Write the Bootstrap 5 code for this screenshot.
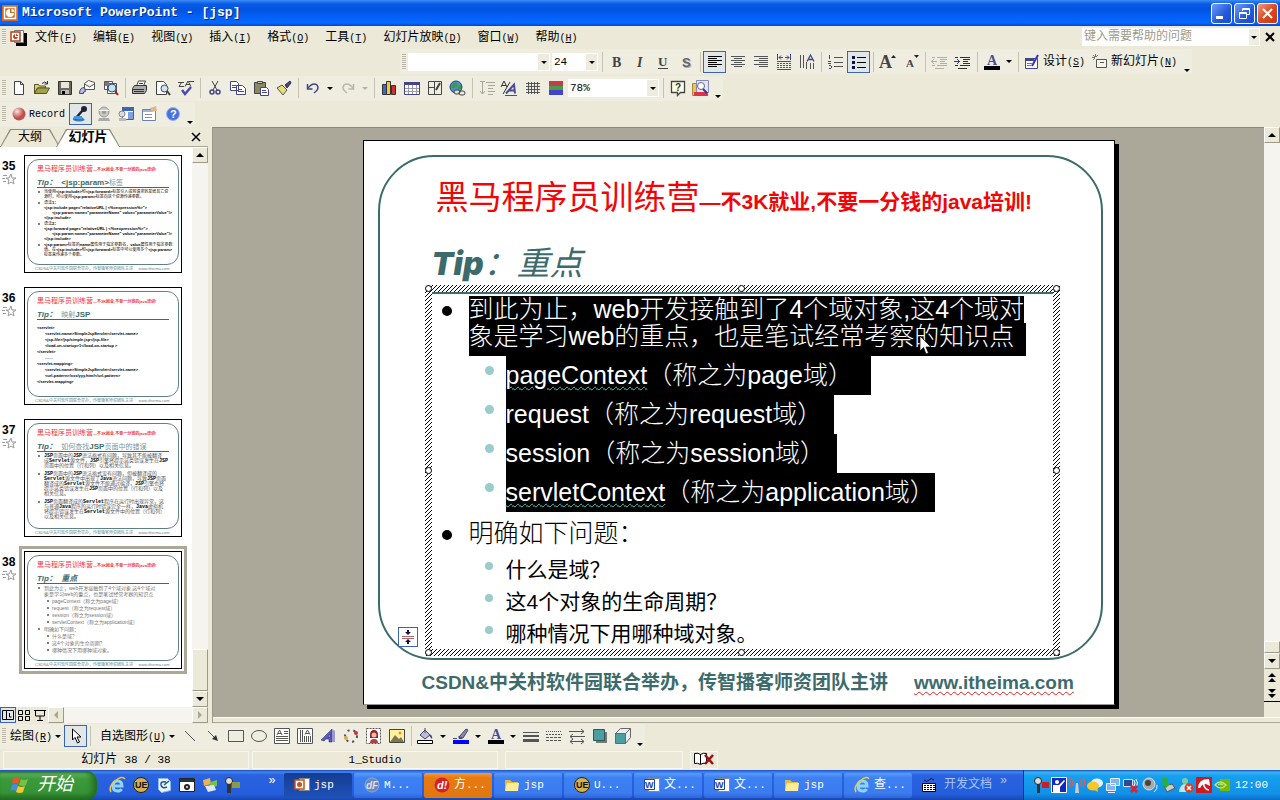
<!DOCTYPE html>
<html lang="zh-CN">
<head>
<meta charset="utf-8">
<meta name="viewport" content="width=device-width, initial-scale=1">
<title>Microsoft PowerPoint - [jsp]</title>
<link href="https://cdn.jsdelivr.net/npm/bootstrap@5.3.0/dist/css/bootstrap.min.css" rel="stylesheet">
<style>
:root{--face:#ece9d8;--shade:#aca899;--teal:#3d6b6b;--ink:#000}
body{background:var(--face);color:#000;font:12px/16px "Liberation Mono","Noto Sans CJK SC",monospace;overflow:hidden}
button{border:0;background:none;padding:0;color:inherit;font:inherit}
svg{display:block;flex:none;overflow:visible}
.app{min-height:100vh}
.titlebar{height:26px;background:linear-gradient(#3c8cf8 0,#0a5be6 4px,#0253e0 9px,#0462fa 18px,#0668fe 23px,#0342c8 26px);color:#fff;padding:0 2px;gap:4px}
.titlebar h1{font:bold 13px/20px "Liberation Mono",monospace;margin:0;text-shadow:1px 1px 0 #0a2a7a}
.winbtn{width:21px;height:21px;border:1px solid #fff;border-radius:3px;background:linear-gradient(135deg,#6f9cf5,#2458dc 60%,#1c4bd0)}
.winbtn.closer{background:linear-gradient(135deg,#ef9a7e,#dd4a22 50%,#c8360e)}
.menubar{height:22px}
.menubar a{color:#000;text-decoration:none;padding:2px 8px 0}
.key{font-size:10px}
.key u{text-underline-offset:1px}
.latin{font-size:11px}
.grip{width:4px;height:16px;margin:0 1px 0 2px;flex:none;background:repeating-linear-gradient(#b5b2a2 0 1px,#f5f4ec 1px 2px)}
.bar{height:26px}
.bar.fmt{height:27px;margin-left:400px}
.strip{height:25px;background:#efede0;border-radius:0 2px 2px 0}
.tool{width:23px;height:22px;display:flex;align-items:center;justify-content:center;flex:none}
.tool.on{background:#e1e6e8;border:1px solid #3d64b4}
.tool.wide{width:auto;gap:3px;padding:0 4px 0 3px}
.tool.wide>span{padding-top:2px}
.drop{width:12px;height:22px;display:flex;align-items:center;justify-content:center;flex:none}
.drop::after,.more::after{content:"";border:3px solid transparent;border-top-color:#000;border-bottom:0}
.drop.dim::after{border-top-color:#b5b2a2}
.more{width:11px;height:20px;display:flex;align-items:flex-end;justify-content:center}
.rule{width:1px;height:20px;margin:0 2px 0 3px;background:#c5c2b2;flex:none}
.combo{appearance:none;border:0;border-radius:0;height:18px;padding:0 14px 0 2px;margin:0 1px;font:11px/16px "Liberation Mono",monospace;color:#000;
 background:#fff url("data:image/svg+xml,%3Csvg xmlns='http://www.w3.org/2000/svg' width='12' height='18'%3E%3Cpath fill='%23eeecdf' d='M0 1h11v16H0z'/%3E%3Cpath d='M3 8h6l-3 3z'/%3E%3C/svg%3E") no-repeat right center}
.ask{width:166px;height:18px;border:0;border-radius:0;background:#fff;padding:0 2px;font:12px/16px "Liberation Mono","Noto Sans CJK SC",monospace}
.ask::placeholder{color:#9d9a8b;opacity:1}
.askdrop{background:#efede0;border:1px solid #fff;height:18px}
/* workspace */
.outline{width:208px;flex:none}
.tabs{height:20px;border-bottom:1px solid var(--shade);padding-right:4px}
.tab{height:18px;position:relative;z-index:0;align-self:flex-end;font-size:12px;line-height:18px;width:60px;margin-bottom:-1px}
.tab::before,.tab::after{content:"";position:absolute;inset:0;z-index:-2;background:#8d8a7c;clip-path:polygon(10px 0,calc(100% - 10px) 0,100% 100%,0 100%)}
.tab::after{inset:1px 1px 0;z-index:-1;background:var(--face)}
.tab.act{font-size:13px;font-weight:bold;width:64px;margin-left:-4px;z-index:1}
.tab.act::after{background:#fff}
.track{width:16px;background:#f5f4ee;flex:none}
.sb{width:16px;height:16px;background:var(--face);border:1px solid;border-color:#fff #9c998a #9c998a #fff;display:flex;align-items:center;justify-content:center;flex:none}
.sb.none{border-color:transparent}
.slider{background:var(--face);border:1px solid;border-color:#fff #9c998a #9c998a #fff}
.thumbs{padding:8px 0 0 2px;gap:14px;background:#fff;overflow:hidden;height:560px;min-width:0}
.num{width:22px;padding-top:4px;flex:none}
.num b{font:bold 12px/14px "Liberation Sans",sans-serif;display:block}
.mini{width:158px;height:118px;border:1px solid #000;background:#fff;padding:3px 2px 0;white-space:nowrap;overflow:hidden;outline-offset:2px;font-family:"Liberation Sans","Noto Sans CJK SC",sans-serif}
.mini.cur{outline:3px solid var(--shade)}
.minibox{border:1px solid #5f8181;border-radius:12px;height:106px;padding:5px 9px 0;overflow:hidden}
.minihead{font-size:7px;line-height:8px;color:#f3343c;margin:0}
.minihead span{font-size:4px;font-weight:bold}
.minititle{font-size:8px;line-height:9px;font-weight:bold;color:#3d6b6b;margin:4px 0 1px;padding-bottom:0;border-bottom:1px solid var(--teal)}
.minititle em{font-style:normal;font-weight:normal;font-size:7px;color:#7c9595}
.minibody{font-size:4px;line-height:5px;margin:0;padding-left:7px;list-style:none}
.minibody b{line-height:0}
.minibody li{position:relative;margin-bottom:1px}
.minibody li.dot::before{content:"";position:absolute;left:-6px;top:2px;width:2px;height:2px;border-radius:50%;background:#555}
.minibody .in{padding-left:8px}
.minibody.mid{font-size:5px;line-height:5px;color:#555}
.minibody.mid li{margin-bottom:3px}
.minibody.mid b{color:#000;font-family:"Liberation Mono",monospace}
.minibody.big{font-size:5px;line-height:6px;color:#777}
.minibody.big .sub{padding-left:8px}
.minibody.big .sub::before{left:3px}
.minifoot{font-size:4px;line-height:6px;color:#6d8686;padding:1px 8px;margin:0}
.views{height:16px}
.views button{width:16px;height:16px;display:flex;align-items:center;justify-content:center}
.views .on{border:1px solid #3d64b4;background:#e1e6e8}
.splitter{width:5px;border-right:1px solid #9c998a;flex:none}
.stage{background:var(--shade);border-top:1px solid #8b8879;padding-top:12px;min-width:0}
.under{height:6px;border-top:1px solid #fff;border-bottom:1px solid #aca899}
/* slide */
.slide{width:752px;max-width:100%;height:565px;background:#fff;border:1px solid #000;border-bottom-color:#9c998a;box-shadow:4px 4px 0 #000;position:relative;padding:14px 11px 0 14px;font-family:"Liberation Sans","Noto Sans CJK SC",sans-serif}
.frame{border:2px solid var(--teal);border-radius:56px;height:505px;padding:21px 41px 0 45px}
.headline{font-size:33px;line-height:40px;font-weight:400;color:#f00606;margin:0;padding-left:11px;white-space:nowrap}
.headline small{font-size:21px;font-weight:700}
.tip{font-size:33px;line-height:40px;font-weight:400;font-style:italic;color:var(--teal);margin:22px 0 1px;padding-left:7px}
.tip b{font:italic 900 32px/40px Inter,"Liberation Sans",sans-serif}
.textbox{position:relative;padding:7px;height:371px;background:url("data:image/svg+xml,%3Csvg xmlns='http://www.w3.org/2000/svg' width='4' height='4' shape-rendering='crispEdges'%3E%3Cpath fill='%23fff' d='M0 0h4v4H0z'/%3E%3Cpath d='M3 0h1v1H3zM2 1h1v1H2zM1 2h1v1H1zM0 3h1v1H0z'/%3E%3C/svg%3E")}
.inside{background:#fff;border-top:2px solid var(--teal);height:357px;padding:2px 0 0 37px;font-size:25px;white-space:nowrap}
.inside ul{list-style:none;margin:0;padding:0}
.inside li{position:relative}
.inside .l1::before{content:"";position:absolute;left:-27px;top:10px;width:10px;height:10px;border-radius:50%;background:#000}
.inside .l2{margin-left:37px}
.inside .l2::before{content:"";position:absolute;left:-21px;top:10px;width:9px;height:9px;border-radius:50%;background:#9cc}
.hl{display:table;background:#000;color:#fff;font-weight:300}
.line1{line-height:27px}
.line2{line-height:27px;padding:0 12px 6px 0}
.hl39{line-height:39px}
.e18{padding-right:18px}.e12{padding-right:12px}
.wavy{text-decoration:underline wavy #4fc6b8 1px;text-underline-offset:2px}
.inside .l1.ask2{line-height:42px;font-weight:300}
.inside .l1.ask2::before{top:18px}
.inside .l2.q{font-size:21px;line-height:32px}
.inside .l2.q::before{top:8px;width:8px;height:8px}
.knob{position:absolute;width:7px;height:7px;border:1px solid #000;border-radius:50%;background:#fff}
.k-t{top:0}.k-m{top:182px}.k-b{bottom:0}.k-l{left:0}.k-c{left:calc(50% - 4px)}.k-r{right:0}
.smart{position:absolute;left:34px;top:486px;width:20px;height:20px;border:1px solid #3d64b4;background:#fff;display:flex;align-items:center;justify-content:center}
.pointer{position:absolute;left:555px;top:194px}
.foot{font-size:19px;line-height:26px;font-weight:700;color:var(--teal);padding-left:44px;margin:10px 0 0;white-space:nowrap;gap:26px}
.foot a{color:inherit;text-decoration:underline wavy #e02020 1px;text-underline-offset:2px}
/* bottom */
.cell{border:1px solid #f7f6ef;height:18px;text-align:center;line-height:16px}
.status{height:21px;padding:1px 3px;gap:3px}
.taskbar{height:30px;background:linear-gradient(#1c49b8 0,#3f86f0 2px,#2a62e0 5px,#245edc 24px,#1b46b0 30px);color:#fff}
.start{width:97px;height:29px;border-radius:0 10px 10px 0;background:linear-gradient(#2c7a2c 0,#5fb45f 3px,#3c9a3c 8px,#359235 22px,#226c22);font-size:18px;font-style:italic;gap:7px;padding-left:10px;box-shadow:inset -4px 0 6px #1f6a1f}
.quick{padding-left:9px;gap:0;width:155px}
.quick button{width:23px;display:flex;justify-content:center}
.task{width:68px;height:25px;border-radius:2px;background:linear-gradient(#5b9bf8,#3c80f2 5px,#3b7cf0 20px,#2f66d6);gap:4px;padding-left:10px;flex:0 1 auto;overflow:hidden;white-space:nowrap}
.task.down{background:linear-gradient(#153d92,#1e51b8)}
.task.alert0{background:linear-gradient(#f59a3c,#e67a10 5px,#e0770f)}
.tray{background:linear-gradient(#0c4fb8 0,#3cb0f6 2px,#16a0ee 6px,#1190e8 24px,#0d6cc8);border-left:1px solid #0a3a8c;width:257px;padding:0 12px 0 9px;gap:2px}
</style>
</head>
<body>
<div class="app d-flex flex-column">

<header class="titlebar d-flex align-items-center">
  <svg width="16" height="16" viewBox="0 0 16 16"><path fill="#d2691e" d="M0 0h16v16H0z"/><path fill="none" stroke="#fff" stroke-width="1.5" d="M2.5 2.5h11v11h-11z"/><path fill="#fff" d="M8 4a4 4 0 1 0 4 4H8zM9.500 4v3h3A3 3 0 0 0 9.500 4z"/></svg>
  <h1 class="flex-grow-1">Microsoft PowerPoint - [jsp]</h1>
  <div class="d-flex" style="gap:2px">
    <button class="winbtn" aria-label="最小化"><svg width="19" height="19"><path fill="#fff" d="M4 12h7v3H4z"/></svg></button>
    <button class="winbtn" aria-label="还原"><svg width="19" height="19" fill="none" stroke="#fff"><path d="M7.500 7V4.500h7v6H12M4.500 8.500h7v6h-7zM4 9.500h8M7 5.500h8"/></svg></button>
    <button class="winbtn closer" aria-label="关闭"><svg width="19" height="19"><path stroke="#fff" stroke-width="2" d="M5 5l9 9M14 5l-9 9"/></svg></button>
  </div>
</header>

<nav class="menubar d-flex align-items-center" aria-label="菜单">
  <span class="grip"></span>
  <svg style="margin-left:3px" width="17" height="17" viewBox="0 0 17 17"><path d="M6 4h11v13H6z"/><path fill="#fff" stroke="#777" d="M4.500 1.500h9v12h-9z"/><path fill="#fff" stroke="#b8401c" stroke-width="1.500" d="M1 3h9v9H1z"/><path fill="#b8401c" d="M5 5a2.500 2.500 0 1 0 3 3H5zM6 4.500V7h2.500z"/></svg>
  <div class="d-flex flex-grow-1 ms-0">
    <a href="#">文件<span class="key">(<u>F</u>)</span></a><a href="#">编辑<span class="key">(<u>E</u>)</span></a><a href="#">视图<span class="key">(<u>V</u>)</span></a><a href="#">插入<span class="key">(<u>I</u>)</span></a><a href="#">格式<span class="key">(<u>O</u>)</span></a><a href="#">工具<span class="key">(<u>T</u>)</span></a><a href="#">幻灯片放映<span class="key">(<u>D</u>)</span></a><a href="#">窗口<span class="key">(<u>W</u>)</span></a><a href="#">帮助<span class="key">(<u>H</u>)</span></a>
  </div>
  <input class="ask" type="text" aria-label="键入需要帮助的问题" placeholder="键入需要帮助的问题">
  <button class="drop askdrop" aria-label="帮助列表"></button>
  <button style="padding:0 6px" aria-label="关闭文档"><svg width="8" height="8"><path stroke="#000" stroke-width="2" d="M0 0l8 8M8 0L0 8"/></svg></button>
</nav>

<div class="bar fmt d-flex align-items-center">
 <div class="strip d-flex align-items-center">
  <span class="grip"></span>
  <select class="combo" style="width:142px" aria-label="字体"><option></option></select>
  <select class="combo" style="width:46px" aria-label="字号"><option>24</option></select>
  <span class="rule"></span>
  <button class="tool" aria-label="加粗"><svg width="16" height="16"><text x="3" y="13" font-family="Liberation Serif" font-weight="bold" font-size="14" fill="#444">B</text></svg></button>
  <button class="tool" aria-label="倾斜"><svg width="16" height="16"><text x="5" y="13" font-family="Liberation Serif" font-weight="bold" font-style="italic" font-size="14" fill="#444">I</text></svg></button>
  <button class="tool" aria-label="下划线"><svg width="16" height="16"><text x="3" y="12" font-family="Liberation Serif" font-weight="bold" font-size="13" fill="#444">U</text><path stroke="#444" d="M3 14.500h10"/></svg></button>
  <button class="tool" aria-label="阴影"><svg width="16" height="16"><text x="4" y="13" font-family="Liberation Sans" font-weight="bold" font-size="13" fill="#666" style="text-shadow:1px 1px 0 #aaa">S</text></svg></button>
  <span class="rule"></span>
  <button class="tool on" aria-label="左对齐"><svg width="16" height="14" stroke="#000"><path d="M1 1.500h14M1 3.500h9M1 5.500h14M1 7.500h9M1 9.500h14M1 11.500h9"/></svg></button>
  <button class="tool" aria-label="居中"><svg width="16" height="14" stroke="#555"><path d="M1 1.500h14M4 3.500h8M1 5.500h14M4 7.500h8M1 9.500h14M4 11.500h8"/></svg></button>
  <button class="tool" aria-label="右对齐"><svg width="16" height="14" stroke="#555"><path d="M1 1.500h14M6 3.500h9M1 5.500h14M6 7.500h9M1 9.500h14M6 11.500h9"/></svg></button>
  <button class="tool" aria-label="分散对齐"><svg width="16" height="16" fill="none" stroke="#555"><path stroke="#448" d="M1.500 0v6M14.500 0v6M3 3.500h4M9 3.500h4M5 1.500l-2 2 2 2M11 1.500l2 2-2 2"/><path d="M1 7.500h14M1 15.500h14"/><path stroke-dasharray="2 1" d="M1 9.500h14M1 11.500h14M1 13.500h14"/></svg></button>
  <button class="tool" aria-label="文字方向"><svg width="16" height="16" stroke="#555"><path d="M1.500 1v13M4.500 1v13M7.500 8v7M11.500 9v6M14.500 9v6" fill="none"/><path stroke="#448" fill="none" stroke-width="1.300" d="M8 7.500L11.500 1 15 7.500M9.500 5.500h4"/></svg></button>
  <span class="rule"></span>
  <button class="tool" aria-label="编号"><svg width="16" height="16" stroke="#555"><path d="M6 3.500h9M6 8.500h9M6 12.500h9"/><path stroke="#448" d="M1.500 1v4M0 7.500h3M0 9.500h3M1 11.500h2M1 14.500h2M3.500 12v2"/></svg></button>
  <button class="tool on" aria-label="项目符号"><svg width="16" height="16" stroke="#000"><path d="M6 3.500h9M6 8.500h9M6 13.500h9"/><path stroke="none" fill="#114" d="M1 2h3v3H1zM1 7h3v3H1zM1 12h3v3H1z"/></svg></button>
  <span class="rule"></span>
  <button class="tool" aria-label="增大字号"><svg width="18" height="16"><text x="0" y="14" font-family="Liberation Serif" font-weight="bold" font-size="18" fill="#444">A</text><path fill="#222" d="M12 4l2.500-3L17 4z"/></svg></button>
  <button class="tool" aria-label="减小字号"><svg width="16" height="16"><text x="3" y="13" font-family="Liberation Serif" font-weight="bold" font-size="11" fill="#444">A</text><path fill="#222" d="M11 1h5l-2.500 3z"/></svg></button>
  <span class="rule"></span>
  <button class="tool" aria-label="减少缩进"><svg width="18" height="14" fill="none" stroke="#b3b0a2"><path d="M1 2.500h3M6 2.500h10M9 4.500h7M9 6.500h5M9 8.500h7M1 10.500h3M6 10.500h10M4 13.500h9M0 6.500h6M3 4L0.500 6.500 3 9"/></svg></button>
  <button class="tool" aria-label="增加缩进"><svg width="18" height="14" fill="none" stroke="#333"><path d="M1 2.500h3M6 2.500h10M9 4.500h7M9 6.500h5M9 8.500h7M1 10.500h3M6 10.500h10M4 13.500h9"/><path stroke="#339" d="M0 6.500h6M3 4l2.500 2.500L3 9"/></svg></button>
  <span class="rule"></span>
  <button class="tool" aria-label="字体颜色"><svg width="16" height="16"><text x="3" y="11" font-family="Liberation Serif" font-weight="bold" font-size="14" fill="#4b4b9b">A</text><path d="M0 12h16v4H0z"/></svg></button><button class="drop" aria-label="更多颜色"></button>
  <span class="rule"></span>
  <button class="tool wide"><svg width="16" height="16"><path fill="#fff" stroke="#448" d="M1.500 4.500h12v10h-12z"/><path fill="#448" d="M1 4h9v3H1z"/><path stroke="#777" d="M3 9.500h5M3 11.500h4"/><path stroke="#33c" stroke-width="2" d="M14 1L8 12"/></svg><span>设计<span class="key">(<u>S</u>)</span></span></button>
  <button class="tool wide"><svg width="16" height="16" fill="none" stroke="#555"><path fill="#f6f5ec" d="M4.500 5.500h10v8h-10z"/><path d="M8 8.500h4"/><path stroke="#777" d="M3.500 0v3M0 3.500h3M1 1l2 2M6 1L4 3M1 6l2-2"/></svg><span>新幻灯片<span class="key">(<u>N</u>)</span></span></button>
  <span class="more"></span>
 </div>
</div>

<div class="bar d-flex align-items-center">
 <div class="strip d-flex align-items-center">
  <span class="grip"></span>
  <button class="tool" aria-label="新建"><svg width="16" height="16"><path fill="#fff" stroke="#444" d="M3.500 1.500h6l3 3v10h-9zM9.500 1.500v3h3"/></svg></button>
  <button class="tool" aria-label="打开"><svg width="17" height="16"><path fill="#d8d08a" stroke="#555522" d="M1.500 13.500v-9h4l1 1.500h6v2h-8z"/><path fill="#a3a14a" stroke="#555522" d="M1.500 13.500l3-5.500h12l-3 5.500z"/><path fill="none" stroke="#333" d="M9 3.500q3-3 5 0M14.500 1v3h-3"/></svg></button>
  <button class="tool" aria-label="保存"><svg width="16" height="16"><path fill="#6b6b5a" stroke="#333" d="M1.500 1.500h13v13h-13z"/><path fill="#e8e6d8" d="M4 2h8v6H4z"/><path fill="#bbb" d="M4 10h8v4H4z"/><path d="M5 11h3v3H5z"/></svg></button>
  <button class="tool" aria-label="电子邮件"><svg width="17" height="16"><path fill="#fff" stroke="#555" d="M5.500 3.500l4-3 6 2v7h-10zM5.500 4l5 3 5-3"/><path fill="#bbd" stroke="#448" d="M.5 13.500q0-6 5-6l1 4q-3 0-2 2z"/></svg></button>
  <button class="tool" aria-label="搜索"><svg width="16" height="16"><path fill="#fff" stroke="#555" d="M4.500 3.500h9v10h-9zM1.500 1.500h8v8h-8z"/><path fill="#778" d="M2 2h4v4H2z"/><circle cx="9" cy="8" r="4" fill="#bde6f0" stroke="#447"/><path stroke="#922" stroke-width="2" d="M12 11l3 4"/></svg></button>
  <span class="rule"></span>
  <button class="tool" aria-label="打印"><svg width="17" height="16"><path fill="#fff" stroke="#444" d="M5.500 6l2-5h7l-2 5"/><path fill="#aaa" stroke="#333" d="M1.500 8.500l2-3h12v5l-2 3h-12z"/><path stroke="#333" d="M2 9.500h11M3 11.500h10M8 3.500h4"/></svg></button>
  <button class="tool" aria-label="打印预览"><svg width="16" height="16"><path fill="#fff" stroke="#444" d="M1.500 1.500h7l3 3v10h-10z"/><circle cx="9.500" cy="8.500" r="3.500" fill="#cfe4ee" stroke="#444"/><path stroke="#444" stroke-width="2" d="M12 11l3 4"/></svg></button>
  <button class="tool" aria-label="拼写检查"><svg width="16" height="16" fill="none"><path stroke="#444" d="M0 2.500h6M3.500 2.500L1 6.500h5M7 6.500L10 1l3 5.500M8 4.500h4M11 1.500h5"/><path stroke="#4b4bb0" stroke-width="2.500" d="M4 10l3 4 6-7"/></svg></button>
  <span class="rule"></span>
  <button class="tool" aria-label="剪切"><svg width="16" height="16" fill="none"><path stroke="#444" d="M5 1l5 9M11 1L6 10"/><circle cx="5" cy="12" r="2" stroke="#448" stroke-width="1.500"/><circle cx="11" cy="12" r="2" stroke="#448" stroke-width="1.500"/></svg></button>
  <button class="tool" aria-label="复制"><svg width="16" height="16" fill="#fff" stroke="#448"><path d="M.5 1.500h6l2 2v7h-8zM6.500 5.500h6l3 3v6h-9z"/><path d="M2 5.500h4M2 7.500h4M8 9.500h4M8 11.500h6"/></svg></button>
  <button class="tool" aria-label="粘贴"><svg width="16" height="16"><path fill="#8a8a62" stroke="#444" d="M1.500 2.500h11v11h-11z"/><path fill="#ccc" stroke="#444" d="M4.500 1.500h5v2h-5z"/><path fill="#fff" stroke="#448" d="M7.500 7.500h6l2 2v6h-8z"/><path stroke="#448" d="M9 10.500h4M9 12.500h5"/></svg></button>
  <button class="tool" aria-label="格式刷"><svg width="16" height="16"><path fill="#e6dc7a" stroke="#555" d="M1 8l5-3 5 5-4 5z"/><path fill="#448" stroke="#335" d="M9 5l5-4 1 2-4 5z"/></svg></button>
  <span class="rule"></span>
  <button class="tool" aria-label="撤消"><svg width="16" height="16" fill="none" stroke="#448"><path stroke-width="1.500" d="M3 8q5-6 9-3 3 4-3 8"/><path d="M2.500 4v5h5" stroke-width="1.500"/></svg></button><button class="drop" aria-label="撤消列表"></button>
  <button class="tool" aria-label="恢复"><svg width="16" height="16" fill="none" stroke="#b9b6a7"><path stroke-width="1.500" d="M13 8Q8 2 4 5q-3 4 3 8M13.500 4v5h-5"/></svg></button><button class="drop dim" aria-label="恢复列表"></button>
  <span class="rule"></span>
  <button class="tool" aria-label="插入图表"><svg width="16" height="16" stroke="#333"><path fill="#46c" d="M1.500 4.500h4v10h-4z"/><path fill="#ec3" d="M5.500 1.500h4v13h-4z"/><path fill="#c33" d="M10.500 5.500h4v9h-4z"/></svg></button>
  <button class="tool" aria-label="插入表格"><svg width="16" height="16"><path fill="#fff" stroke="#448" d="M.5 2.500h15v12H.5z"/><path fill="#448" d="M0 2h16v3H0z"/><path stroke="#99a" d="M4.500 5v9M8.500 5v9M12.500 5v9M1 8.500h14M1 11.500h14"/></svg></button>
  <button class="tool" aria-label="表格和边框"><svg width="16" height="16" fill="none" stroke="#444"><path d="M1.500 1.500h13v13h-13zM7.500 2v12M2 7.500h6"/><path stroke-width="2" d="M13 3L9 10"/></svg></button>
  <button class="tool" aria-label="超链接"><svg width="17" height="17"><circle cx="7" cy="7" r="6" fill="#4a8fd0" stroke="#247"/><path fill="#3a9a4a" d="M4 3q3-2 4 1T5 8 3 6zM9 6l3-1v4l-3 1z"/><rect x="5" y="10" width="6" height="4" rx="2" fill="#ddd" stroke="#444"/><rect x="10" y="11" width="6" height="4" rx="2" fill="none" stroke="#444"/></svg></button>
  <span class="rule"></span>
  <button class="tool" aria-label="全部展开"><svg width="16" height="16" fill="none" stroke="#aaa798"><path d="M3.500 1v13M1 11l2.500 3L6 11M1 1.500h5M7 2.500h9M9 5.500h7M9 8.500h5M9 11.500h7M9 14.500h5"/></svg></button>
  <button class="tool" aria-label="显示格式"><svg width="17" height="16" fill="none"><path stroke="#333" d="M0 7l3-6 3 6M1 5.500h4M2 14L9 2"/><path stroke="#4b4b9b" stroke-width="2" d="M5 13.500l8-9 1 9M8 10.500h6"/><path stroke="#4b4b9b" d="M4 15.500h12"/></svg></button>
  <button class="tool" aria-label="网格"><svg width="16" height="16" stroke="#555"><path d="M3.500 2v12M6.500 2v12M9.500 2v12M12.500 2v12M1 3.500h14M1 6.500h14M1 9.500h14M1 12.500h14"/></svg></button>
  <button class="tool" aria-label="颜色"><svg width="16" height="16"><path fill="#c0404a" d="M1 1h14v5H1z"/><path fill="#4a9a4a" d="M1 6h14v4H1z"/><path fill="#4444c8" d="M1 10h14v5H1z"/></svg></button>
  <select class="combo" style="width:91px" aria-label="显示比例"><option>78%</option></select>
  <span class="rule"></span>
  <button class="tool" aria-label="帮助"><svg width="16" height="16"><path fill="#ffffe6" stroke="#444" stroke-width="1.300" d="M1.500 1.500h13v11h-4l-3 3v-3h-6z"/><text x="5" y="11" font-family="Liberation Sans" font-weight="bold" font-size="10" fill="#333">?</text></svg></button>
  <button class="tool" aria-label="信息检索"><svg width="17" height="17"><path fill="#ecc83a" stroke="#a84" d="M.5 3.500h5v12h-5z"/><path fill="#dfe6f6" stroke="#88b" d="M4.500.5h12v12h-12z"/><path fill="#d34" d="M2 12h14v4H2z"/><circle cx="9" cy="6" r="3.500" fill="#fff" stroke="#667"/><path stroke="#33a" stroke-width="2" d="M11 9l4 4"/></svg></button>
  <span class="more"></span>
 </div>
</div>

<div class="bar d-flex align-items-center">
 <div class="strip d-flex align-items-center">
  <span class="grip"></span>
  <button class="tool wide"><svg width="16" height="16"><defs><radialGradient id="ball" cx=".35" cy=".3"><stop offset="0" stop-color="#fbe4e0"/><stop offset="1" stop-color="#c05050"/></radialGradient></defs><circle cx="9" cy="8" r="6.500" fill="url(#ball)"/></svg><span class="key">Record</span></button>
  <button class="tool on" aria-label="麦克风"><svg width="18" height="18"><path fill="#3a7ab8" d="M1 13q4-4 9-1l3 3q-6 3-12 0z"/><path fill="none" stroke="#223" stroke-width="2.500" d="M3 14l8-9"/><circle cx="12" cy="4" r="3" fill="#223"/><path fill="#49d" d="M2 11h8v3H2z"/></svg></button>
  <button class="tool" aria-label="摄像头"><svg width="16" height="16"><circle cx="8" cy="6" r="5" fill="#c9c8c2" stroke="#999"/><circle cx="8" cy="6" r="2" fill="#999"/><path fill="#aaa" d="M3 12h10l1 3H2z"/><path stroke="#fff" d="M3 4.500h10"/></svg></button>
  <button class="tool" aria-label="窗口录制"><svg width="17" height="16"><path fill="#fff" stroke="#45619a" d="M4.500 1.500h11v12h-11z"/><path fill="#3f66b4" d="M4 1h12v4H4z"/><path fill="#7fa3d8" d="M10 6h5v7h-5z"/><circle cx="4" cy="8" r="3" fill="#ddd" stroke="#888"/><path fill="#bbb" d="M1 12h7v3H1z"/></svg></button>
  <button class="tool" aria-label="选项"><svg width="17" height="16"><path fill="#fff" stroke="#6a82b0" d="M1.500 3.500h13v11h-13z"/><path fill="#9db4da" d="M2 4h9v2H2z"/><path stroke="#88a" d="M4 8.500h7M4 11.500h7"/><path fill="#ddb98a" d="M9 2l6-2 1 5-5 1z"/></svg></button>
  <button class="tool" aria-label="录制帮助"><svg width="16" height="16"><circle cx="8" cy="8" r="6.500" fill="#4a6fe0" stroke="#9ab2f4"/><text x="5" y="12" font-family="Liberation Sans" font-weight="bold" font-size="11" fill="#fff">?</text></svg></button>
  <span class="more"></span>
 </div>
</div>

<main class="d-flex flex-grow-1">
 <aside class="outline d-flex flex-column">
  <div class="tabs d-flex align-items-center">
   <button class="tab">大纲</button><button class="tab act">幻灯片</button>
   <button class="ms-auto px-1" aria-label="关闭窗格"><svg width="8" height="8"><path stroke="#000" stroke-width="1.500" d="M0 0l8 8M8 0L0 8"/></svg></button>
  </div>
  <div class="d-flex flex-grow-1">
   <div class="thumbs d-flex flex-column flex-grow-1">
    <div class="d-flex"><div class="num"><b>35</b><svg width="14" height="13" fill="none" stroke="#999"><path d="M9 1l1 4h4l-3 2 1 4-3-2-3 2 1-4-3-2h3zM1 2.500h4M0 5.500h3M1 8.500h3"/></svg></div>
     <div class="mini"><div class="minibox"><p class="minihead">黑马程序员训练营<span>—不3K就业,不要一分钱的java培训!</span></p><p class="minititle"><i>Tip：</i>&nbsp; &lt;jsp:param&gt;<em>标签</em></p>
      <ul class="minibody"><li class="dot">当使用<b>&lt;jsp:include&gt;</b>和<b>&lt;jsp:forward&gt;</b>标签引入或将请求转发给其它资<br>源时，可以使用<b>&lt;jsp:param&gt;</b>标签向这个资源传递参数。</li><li class="dot">语法<b>1：</b><br><b>&lt;jsp:include page="relativeURL | &lt;%=expression%&gt;"&gt;</b><div class="in"><b>&lt;jsp:param name="parameterName" value="parameterValue"/&gt;</b></div><b>&lt;/jsp:include&gt;</b></li><li class="dot">语法<b>2：</b><br><b>&lt;jsp:forward page="relativeURL | &lt;%=expression%&gt;"&gt;</b><div class="in"><b>&lt;jsp:param name="parameterName" value="parameterValue"/&gt;</b></div><b>&lt;/jsp:include&gt;</b></li><li class="dot"><b>&lt;jsp:param&gt;</b>标签的<b>name</b>属性用于指定参数名，<b>value</b>属性用于指定参数<br>值。在<b>&lt;jsp:include&gt;</b>和<b>&lt;jsp:forward&gt;</b>标签中可以使用多个<b>&lt;jsp:param&gt;</b><br>标签来传递多个参数。</li></ul></div><p class="minifoot">CSDN&amp;中关村软件园联合举办，传智播客师资团队主讲 &nbsp; &nbsp; www.itheima.com</p></div></div>
    <div class="d-flex"><div class="num"><b>36</b><svg width="14" height="13" fill="none" stroke="#999"><path d="M9 1l1 4h4l-3 2 1 4-3-2-3 2 1-4-3-2h3zM1 2.500h4M0 5.500h3M1 8.500h3"/></svg></div>
     <div class="mini"><div class="minibox"><p class="minihead">黑马程序员训练营<span>—不3K就业,不要一分钱的java培训!</span></p><p class="minititle"><i>Tip：</i>&nbsp; <em>映射</em>JSP</p>
      <ul class="minibody fw-bold ps-0 pt-1"><li>&lt;servlet&gt;</li><li class="in">&lt;servlet-name&gt;SimpleJspServlet&lt;/servlet-name&gt;</li><li class="in">&lt;jsp-file&gt;/jsp/simple.jsp&lt;/jsp-file&gt;</li><li class="in">&lt;load-on-startup&gt;1&lt;/load-on-startup &gt;</li><li>&lt;/servlet&gt;</li><li class="in">……</li><li>&lt;servlet-mapping&gt;</li><li class="in">&lt;servlet-name&gt;SimpleJspServlet&lt;/servlet-name&gt;</li><li class="in">&lt;url-pattern&gt;/xxx/yyy.html&lt;/url-pattern&gt;</li><li>&lt;/servlet-mapping&gt;</li></ul></div><p class="minifoot">CSDN&amp;中关村软件园联合举办，传智播客师资团队主讲 &nbsp; &nbsp; www.itheima.com</p></div></div>
    <div class="d-flex"><div class="num"><b>37</b><svg width="14" height="13" fill="none" stroke="#999"><path d="M9 1l1 4h4l-3 2 1 4-3-2-3 2 1-4-3-2h3zM1 2.500h4M0 5.500h3M1 8.500h3"/></svg></div>
     <div class="mini"><div class="minibox"><p class="minihead">黑马程序员训练营<span>—不3K就业,不要一分钱的java培训!</span></p><p class="minititle"><i>Tip：</i>&nbsp; <em>如何查找</em>JSP<em>页面中的错误</em></p>
      <ul class="minibody mid"><li class="dot"><b>JSP</b>页面中的<b>JSP</b>语法格式有问题，导致其不能被翻译<br>成<b>Servlet</b>源文件，<b>JSP</b>引擎将提示这类错误发生在<b>JSP</b><br>页面中的位置（行和列）以及相关信息。</li><li class="dot"><b>JSP</b>页面中的<b>JSP</b>语法格式没有问题，但被翻译成的<br><b>Servlet</b>源文件中出现了<b>Java</b>语法问题，导致<b>JSP</b>页面<br>翻译成的<b>Servlet</b>源文件不能通过编译，<b>JSP</b>引擎也将<br>提示这类错误发生在<b>JSP</b>页面中的位置（行和列）以及<br>相关信息。</li><li class="dot"><b>JSP</b>页面翻译成的<b>Servlet</b>程序在运行时出现异常，这<br>与普通<b>Java</b>程序的运行时错误完全一样，<b>Java</b>虚拟机<br>将提示错误发生在<b>Servlet</b>源文件中的位置（行和列）<br>以及相关信息。</li></ul></div><p class="minifoot">CSDN&amp;中关村软件园联合举办，传智播客师资团队主讲 &nbsp; &nbsp; www.itheima.com</p></div></div>
    <div class="d-flex"><div class="num"><b>38</b><svg width="14" height="13" fill="none" stroke="#999"><path d="M9 1l1 4h4l-3 2 1 4-3-2-3 2 1-4-3-2h3zM1 2.500h4M0 5.500h3M1 8.500h3"/></svg></div>
     <div class="mini cur"><div class="minibox"><p class="minihead">黑马程序员训练营<span>—不3K就业,不要一分钱的java培训!</span></p><p class="minititle"><i>Tip：</i>&nbsp; <i>重点</i></p>
      <ul class="minibody big"><li class="dot">到此为止，web开发接触到了4个域对象,这4个域对<br>象是学习web的重点，也是笔试经常考察的知识点</li><li class="dot sub">pageContext（称之为page域）</li><li class="dot sub">request（称之为request域）</li><li class="dot sub">session（称之为session域）</li><li class="dot sub">servletContext（称之为application域）</li><li class="dot">明确如下问题：</li><li class="dot sub">什么是域？</li><li class="dot sub">这4个对象的生命周期？</li><li class="dot sub">哪种情况下用哪种域对象。</li></ul></div><p class="minifoot">CSDN&amp;中关村软件园联合举办，传智播客师资团队主讲 &nbsp; &nbsp; www.itheima.com</p></div></div>
   </div>
   <div class="track d-flex flex-column">
    <button class="sb" aria-label="上"><svg width="8" height="4"><path d="M0 4l4-4 4 4z"/></svg></button>
    <div class="slider mt-auto" style="height:42px"></div>
    <button class="sb" aria-label="下"><svg width="8" height="4"><path d="M0 0h8L4 4z"/></svg></button>
   </div>
  </div>
  <div class="views d-flex">
   <button class="on" aria-label="普通视图"><svg width="12" height="10" fill="none" stroke="#000"><path d="M.5.5h11v9H.5zM4.500 1v8M7.500 3v4h2"/></svg></button>
   <button aria-label="浏览视图"><svg width="12" height="11" fill="none" stroke="#000"><path d="M.5.5h4v4h-4zM7.500.5h4v4h-4zM.5 6.500h4v4h-4zM7.500 6.500h4v4h-4z"/></svg></button>
   <button aria-label="放映"><svg width="12" height="11" fill="none" stroke="#000"><path d="M0 .5h12M1.500 1v5h9V1M6 6v4M3 10.500h6"/></svg></button>
   <button class="sb" aria-label="左"><svg width="4" height="8"><path fill="#aaa798" d="M4 0v8L0 4z"/></svg></button>
   <span class="flex-grow-1" style="background:#f5f4ee"></span>
   <button class="sb" aria-label="右"><svg width="4" height="8"><path fill="#aaa798" d="M0 0v8l4-4z"/></svg></button>
  </div>
 </aside>
 <div class="splitter"></div>
 <div class="d-flex flex-column flex-grow-1">
  <div class="d-flex flex-grow-1">
   <section class="stage flex-grow-1">
    <article class="slide mx-auto">
     <div class="frame">
      <h2 class="headline">黑马程序员训练营<small>—不3K就业,不要一分钱的java培训!</small></h2>
      <h3 class="tip"><b>Tip</b>：重点</h3>
      <div class="textbox">
       <div class="inside">
        <ul>
         <li class="l1"><span class="hl line1">到此为止，web开发接触到了4个域对象,这4个域对</span><span class="hl line2">象是学习web的重点，也是笔试经常考察的知识点</span></li>
         <li class="l2"><span class="hl hl39 e18"><span class="wavy">pageContext</span>（称之为page域）</span></li>
         <li class="l2"><span class="hl hl39 e12">request（称之为request域）</span></li>
         <li class="l2"><span class="hl hl39 e12">session（称之为session域）</span></li>
         <li class="l2"><span class="hl hl39"><span class="wavy">servletContext</span>（称之为application域）</span></li>
         <li class="l1 ask2">明确如下问题：</li>
         <li class="l2 q">什么是域？</li>
         <li class="l2 q">这4个对象的生命周期？</li>
         <li class="l2 q">哪种情况下用哪种域对象。</li>
        </ul>
       </div>
       <i class="knob k-t k-l"></i><i class="knob k-t k-c"></i><i class="knob k-t k-r"></i><i class="knob k-m k-l"></i><i class="knob k-m k-r"></i><i class="knob k-b k-l"></i><i class="knob k-b k-c"></i><i class="knob k-b k-r"></i>
      </div>
     </div>
     <p class="foot d-flex"><span>CSDN&amp;中关村软件园联合举办，传智播客师资团队主讲</span><a href="#">www.itheima.com</a></p>
     <button class="smart" aria-label="自动调整选项"><svg width="14" height="14"><path fill="#114" d="M6 0h2v2h2L7 5 4 2h2zM6 14h2v-2h2L7 9l-3 3h2z"/><path stroke="#a66" d="M1 6.500h12M1 8.500h12"/></svg></button>
     <svg class="pointer" width="12" height="20"><path fill="#fff" stroke="#000" stroke-width=".7" d="M1 1v15l3.500-3.500L7 19l2.500-1L7 12h5z"/></svg>
    </article>
   </section>
   <div class="track d-flex flex-column">
    <button class="sb" aria-label="向上滚动"><svg width="8" height="4"><path d="M0 4l4-4 4 4z"/></svg></button>
    <div class="slider mt-auto" style="height:12px"></div>
    <button class="sb" aria-label="向下滚动"><svg width="8" height="4"><path d="M0 0h8L4 4z"/></svg></button>
    <button class="sb none" aria-label="上一张"><svg width="8" height="9"><path d="M0 4l4-4 4 4zM0 9l4-4 4 4z"/></svg></button>
    <button class="sb none" aria-label="下一张"><svg width="8" height="9"><path d="M0 0h8L4 4zM0 5h8L4 9z"/></svg></button>
    <div style="height:16px;background:#ece9d8;border-top:1px solid #000"></div>
   </div>
  </div>
  <div class="under"></div>
 </div>
</main>

<div class="bar d-flex align-items-center">
 <div class="strip d-flex align-items-center">
  <span class="grip"></span>
  <button class="tool wide pe-0"><span>绘图<span class="key">(<u>R</u>)</span></span></button><button class="drop" aria-label="绘图菜单"></button>
  <button class="tool on" aria-label="选择对象"><svg width="12" height="16"><path fill="#fff" stroke="#000" d="M2.500 1v11l2.500-2.500L7.500 15l2-1L7 9h4z"/></svg></button>
  <span class="rule"></span>
  <button class="tool wide ms-1 pe-0"><span>自选图形<span class="key">(<u>U</u>)</span></span></button><button class="drop" aria-label="自选图形菜单"></button>
  <button class="tool" aria-label="直线"><svg width="16" height="16"><path stroke="#555" d="M3 3l10 10"/></svg></button>
  <button class="tool" aria-label="箭头"><svg width="16" height="16"><path stroke="#555" d="M3 3l8 8"/><path fill="#333" d="M13 13l-6-2 4-4z"/></svg></button>
  <button class="tool" aria-label="矩形"><svg width="16" height="16"><path fill="none" stroke="#555" d="M.5 2.500h15v11H.5z"/></svg></button>
  <button class="tool" aria-label="椭圆"><svg width="16" height="16"><ellipse cx="8" cy="8" rx="7.500" ry="5.500" fill="none" stroke="#555"/></svg></button>
  <button class="tool" aria-label="文本框"><svg width="16" height="16" fill="#fff" stroke="#555"><path d="M.5.5h15v15H.5z"/><path d="M10 3.500h4M10 5.500h4M2 8.500h12M2 10.500h12M2 12.500h12M3 7l2.500-5L8 7M4 5.500h3"/></svg></button>
  <button class="tool" aria-label="竖排文本框"><svg width="16" height="16" fill="#fff" stroke="#555"><path d="M.5.5h15v15H.5z"/><path d="M3.500 2v12M5.500 2v12M7.500 8v6M9.500 8v6M11.500 8v6M13.500 8v6M8 6.500L10.500 2 13 6.500M9 5.500h3"/></svg></button>
  <button class="tool" aria-label="艺术字"><svg width="16" height="16"><path fill="#5a5ac8" stroke="#224" stroke-width=".5" d="M1 12L12 1v13H9v-3H6l-2 2zM8 9h2V6z"/><path fill="#99c" d="M12 1l3 2v11h-3z"/></svg></button>
  <button class="tool" aria-label="图示"><svg width="16" height="16"><circle cx="8" cy="8" r="6" fill="none" stroke="#4a4a7a" stroke-width="2" stroke-dasharray="2 4"/><circle cx="13" cy="5" r="2" fill="#c33"/><circle cx="3" cy="10" r="2" fill="#da4"/></svg></button>
  <button class="tool" aria-label="剪贴画"><svg width="16" height="16"><path fill="#fff" stroke="#555" stroke-dasharray="2 1" d="M.5.5h14v15H.5z"/><path fill="#922" d="M4 7q0-5 4-5t4 5v3H4z"/><circle cx="8" cy="7" r="2.500" fill="#eba"/><path fill="#a44" d="M4 15q0-4 4-4t4 4z"/></svg></button>
  <button class="tool" aria-label="图片"><svg width="16" height="16"><path fill="#fff29a" stroke="#444" d="M.5 1.500h15v13H.5z"/><circle cx="11" cy="5" r="1.500" fill="#d93"/><path fill="#7a7a52" d="M1 14l5-7 4 4 2-2 3 5z"/></svg></button>
  <span class="rule"></span>
  <button class="tool" aria-label="填充颜色"><svg width="17" height="16"><path fill="#bbd" stroke="#446" d="M3 7l5-5 5 5-5 4z"/><path fill="#448" d="M12 6q4 1 3 5-2-1-3-5z"/><path fill="none" stroke="#446" d="M8 5V0"/><path fill="#fff" stroke="#000" d="M.5 12.500h15v3H.5z"/></svg></button><button class="drop" aria-label="更多填充"></button>
  <button class="tool" aria-label="线条颜色"><svg width="16" height="16"><path fill="#88a" stroke="#446" d="M6 9l7-8 2 1-5 8z"/><path fill="#448" d="M0 10h4v1H0zM5 8l5 3-4 0z"/><path fill="#00f" d="M0 12h16v4H0z"/></svg></button><button class="drop" aria-label="更多线条颜色"></button>
  <button class="tool" aria-label="字体色"><svg width="16" height="16"><text x="3" y="11" font-family="Liberation Serif" font-weight="bold" font-size="14" fill="#4b4b9b">A</text><path d="M0 12h16v4H0z"/></svg></button><button class="drop" aria-label="更多字体色"></button>
  <button class="tool" aria-label="线型"><svg width="16" height="14" stroke="#555"><path d="M0 3.500h16"/><path stroke-width="2" d="M0 7h16"/><path stroke-width="3" d="M0 11.500h16"/></svg></button>
  <button class="tool" aria-label="虚线线型"><svg width="16" height="14" stroke="#555"><path d="M0 2.500h16" stroke-dasharray="1 1"/><path stroke-dasharray="2 1" d="M0 5.500h16"/><path stroke-dasharray="3 1" d="M0 8.500h16M0 11.500h16"/></svg></button>
  <button class="tool" aria-label="箭头样式"><svg width="16" height="16" fill="none" stroke="#555"><path d="M0 3.500h15M12 1l3 2.500L12 6M1 8.500h15M4 6L1 8.500 4 11M1 13.500h14M4 11l-3 2.500L4 16M12 11l3 2.500-3 2.500"/></svg></button>
  <button class="tool" aria-label="阴影样式"><svg width="16" height="16"><path fill="#777" d="M4 4h11v11H4z"/><path fill="#4aa0a0" stroke="#355" d="M1.500 1.500h11v11h-11z"/></svg></button>
  <button class="tool" aria-label="三维效果"><svg width="16" height="16"><path fill="#eee" stroke="#666" d="M.5 5.500l5-5h10v9l-5 6z"/><path fill="#4aa0a0" stroke="#477" d="M.5 5.500h10v10H.5z"/><path stroke="#666" d="M10.500 5.500l5-5"/></svg></button>
  <span class="more"></span>
 </div>
</div>

<div class="status d-flex align-items-center">
 <div class="cell" style="width:246px">幻灯片 <span class="latin">38 / 38</span></div>
 <div class="cell latin" style="width:246px">1_Studio</div>
 <div class="cell ms-1" style="width:178px"></div>
 <div class="cell ms-1 d-flex justify-content-center" style="width:28px"><svg width="21" height="14"><path fill="#fff" stroke="#000" d="M.5 1.500q4-1 6 1 3-2 6-1v10q-4-1-6 1-3-2-6-1zM6.500 2v10"/><path stroke="#911" stroke-width="2.500" d="M11 3l8 9M19 3l-8 9"/></svg></div>
</div>

<footer class="taskbar d-flex align-items-center">
 <button class="start d-flex align-items-center"><svg width="20" height="19"><path fill="#e8562a" d="M3 2q3-2 7 0L8 8Q5 6 2 8z"/><path fill="#7ac043" d="M11 3q3 2 7 0l-2 6q-3 2-7 0z"/><path fill="#3f8fe8" d="M2 9q3-2 6 0l-2 6Q3 13 0 15z"/><path fill="#f8c82a" d="M8 10q4 2 7 0l-2 6q-3 2-7 0z"/></svg>开始</button>
 <div class="quick d-flex align-items-center">
  <button aria-label="浏览器"><svg width="17" height="16" fill="none"><path stroke="#8fd4fa" stroke-width="3" d="M4 9h9q0-5-4.500-5T4 9q0 5 4.500 5 3 0 4-2"/><path stroke="#f0c83a" stroke-width="1.500" d="M2 15Q-1 10 6 4t10-2"/></svg></button>
  <button aria-label="编辑器"><svg width="16" height="16"><circle cx="8" cy="8" r="7.500" fill="#d6b04c" stroke="#221"/><text x="2" y="11" font-family="Liberation Sans" font-weight="bold" font-size="9" fill="#111">UE</text></svg></button>
  <button aria-label="桌面"><svg width="16" height="16"><path fill="#eaf4ff" stroke="#8bb8ee" d="M2.500 1.500h9l3 3v9l-9 2-3-3z"/><path fill="none" stroke="#258" stroke-width="1.500" d="M10 5q-6-1-5 3t6 2M8 8l5-4"/></svg></button>
  <button aria-label="批处理"><svg width="16" height="16"><path fill="#fff" stroke="#222" d="M.5 1.500h15v13H.5z"/><path fill="#234" d="M1 2h14v3H1z"/><circle cx="8" cy="10" r="3" fill="#222"/><circle cx="8" cy="10" r="1" fill="#fff"/></svg></button>
  <button aria-label="助手"><svg width="16" height="16"><path fill="#f0b04a" d="M1 3l7-2 1 6-7 2z"/><path fill="#7ac043" d="M8 5l7-2v6l-7 2z"/><path fill="#dfe9f6" d="M3 9l9-1 2 5-8 2z"/></svg></button>
  <button aria-label="工具"><svg width="17" height="16"><circle cx="5" cy="4" r="3.500" fill="#ddd" stroke="#222"/><path fill="#333" d="M3 7h4v9H3z"/><path fill="#8a9a4a" d="M8 5h8v6H8z"/></svg></button>
 </div>
 <button style="width:32px" class="ps-2 pb-2" aria-label="更多快速启动">»</button>
 <div class="d-flex flex-grow-1 ps-0" style="gap:2px">
  <button class="task down d-flex align-items-center"><svg width="16" height="16"><path fill="#fff" stroke="#888" d="M5.500 1.500h10v12h-10z"/><path fill="#fff" stroke="#c8501c" stroke-width="1.500" d="M1 3h9v9H1z"/><circle cx="5.500" cy="7.500" r="2.500" fill="#c8501c"/></svg><span class="latin">jsp</span></button>
  <button class="task d-flex align-items-center"><svg width="16" height="16"><circle cx="8" cy="8" r="7" fill="#6a86b8" stroke="#8fa8d0"/><text x="2" y="12" font-family="Liberation Sans" font-style="italic" font-weight="bold" font-size="10" fill="#dde">dF</text></svg><span class="latin">M...</span></button>
  <button class="task alert0 d-flex align-items-center"><svg width="16" height="16"><circle cx="8" cy="8" r="7.500" fill="#d81e28"/><text x="3" y="12" font-family="Liberation Sans" font-style="italic" font-weight="bold" font-size="11" fill="#fff">d!</text></svg><span>方<span class="latin">...</span></span></button>
  <button class="task d-flex align-items-center"><svg width="16" height="16"><path fill="#e8b83a" d="M1 3h5l2 2h6v9H1z"/><path fill="#fdec9a" d="M3 6h12l-1 8H1z"/></svg><span class="latin">jsp</span></button>
  <button class="task d-flex align-items-center"><svg width="16" height="16"><circle cx="8" cy="8" r="7.500" fill="#d6b04c" stroke="#221"/><text x="2" y="11" font-family="Liberation Sans" font-weight="bold" font-size="9" fill="#111">UE</text></svg><span class="latin">U...</span></button>
  <button class="task d-flex align-items-center"><svg width="16" height="16"><path fill="#fff" stroke="#888" d="M4.500 1.500h11v13h-11z"/><path fill="#fff" stroke="#24a" d="M.5 2.500h10v10H.5z"/><text x="1" y="11" font-family="Liberation Sans" font-weight="bold" font-size="9" fill="#24a">W</text></svg><span>文<span class="latin">...</span></span></button>
  <button class="task d-flex align-items-center"><svg width="16" height="16"><path fill="#fff" stroke="#888" d="M4.500 1.500h11v13h-11z"/><path fill="#fff" stroke="#24a" d="M.5 2.500h10v10H.5z"/><text x="1" y="11" font-family="Liberation Sans" font-weight="bold" font-size="9" fill="#24a">W</text></svg><span>文<span class="latin">...</span></span></button>
  <button class="task d-flex align-items-center"><svg width="16" height="16"><path fill="#e8b83a" d="M1 3h5l2 2h6v9H1z"/><path fill="#fdec9a" d="M3 6h12l-1 8H1z"/></svg><span class="latin">jsp</span></button>
  <button class="task d-flex align-items-center"><svg width="16" height="16" fill="none"><path stroke="#8fd4fa" stroke-width="3" d="M4 9h9q0-5-4.500-5T4 9q0 5 4.500 5 3 0 4-2"/><path stroke="#f0c83a" stroke-width="1.500" d="M2 15Q-1 10 6 4t9-2"/></svg><span>查<span class="latin">...</span></span></button>
 </div>
 <div class="d-flex align-items-center" style="width:101px;color:#a9c6f6"><svg width="14" height="14"><path d="M2 2q3 3 5 0t5 0" fill="none" stroke="#113"/><path fill="#fff" stroke="#000" d="M.5 5.500h13v8H.5z"/><path stroke="#000" stroke-dasharray="2 1" d="M2 7.500h11M2 9.500h11M2 11.500h11"/></svg><span class="ms-2">开发文档</span><span class="ms-2 mb-2">»</span></div>
 <div class="tray d-flex align-items-center align-self-stretch">
  <svg width="16" height="16"><circle cx="5" cy="4" r="3.500" fill="#ddd" stroke="#222"/><path fill="#333" d="M4 7h3v9H4z"/><path fill="#c81e28" d="M9 5h7v6H9z"/></svg>
  <svg width="16" height="16"><path fill="#1428c0" stroke="#fff" d="M.5.5h15v15H.5z"/><circle cx="6" cy="5" r="2" fill="#fff"/><path fill="#fff" d="M2 15V8h6l5-5 1 1-5 6v5z"/></svg>
  <svg width="16" height="16"><path fill="none" stroke="#e05a5a" stroke-width="1.500" d="M5 3q-3 3 0 6M11 3q3 3 0 6M2 1q-3 5 0 9M14 1q3 5 0 9"/><path fill="#ccc" d="M7 6h2l1 10H6z"/></svg>
  <svg width="16" height="16"><ellipse cx="10" cy="6" rx="6" ry="4.500" fill="#e8f2ff"/><ellipse cx="6" cy="9" rx="6" ry="4.500" fill="#f6c62a"/><path fill="#f6c62a" d="M6 12l5 3-1-5z"/></svg>
  <svg width="16" height="16"><path fill="#7fb6f6" stroke="#eef" d="M5.500 1.500h9v7h-9zM1.500 6.500h9v7h-9z"/><path stroke="#eef" d="M3 15.500h7"/></svg>
  <svg width="17" height="16"><path fill="#2a4a9a" stroke="#dde" d="M.5 2.500h9v7h-9z"/><path fill="none" stroke="#fff" d="M11 3q2 3 0 6M13 2q3 4 0 8"/><path stroke="#e0202a" stroke-width="2.500" d="M8 9l6 6M14 9l-6 6"/></svg>
  <svg width="16" height="16"><circle cx="7" cy="7" r="6" fill="#aaa" stroke="#ddd"/><circle cx="6" cy="6" r="3" fill="#444"/><path fill="none" stroke="#eee" d="M12 15q4-3 3-7"/></svg>
  <svg width="16" height="16"><path fill="#ccc" stroke="#555" d="M4 9l8-2 3 4-8 4z"/><path fill="#2ab03a" d="M2 1h6v5h3l-5 5-5-5h2z"/></svg>
  <svg width="16" height="16"><circle cx="7" cy="4" r="3" fill="#7ad0a0"/><path fill="#bde8f8" d="M1 15q1-8 6-8t5 8z"/><circle cx="11" cy="11" r="4.500" fill="#e03a1a"/><path stroke="#fff" stroke-width="1.500" d="M9 9l4 4M13 9l-4 4"/></svg>
  <svg width="16" height="16"><path fill="#d01820" d="M0 0h16v16H0z"/><path fill="#fff" d="M2 11Q2 2 13 2l1 7-4-2-4 1-2 3z"/><path fill="none" stroke="#fff" stroke-width="1.500" d="M7 6q2 7 6 7"/></svg>
  <svg width="17" height="16"><path fill="#76b900" d="M6 2h10v12H6z"/><path fill="none" stroke="#b9e27a" stroke-width="1.500" d="M1 8q5-6 11 0-5 6-11 0zM4 8q3-2 5 0"/></svg>
  <time class="latin ms-auto">12:00</time>
 </div>
</footer>
</div>
<script src="https://cdn.jsdelivr.net/npm/bootstrap@5.3.0/dist/js/bootstrap.bundle.min.js"></script>
</body>
</html>
